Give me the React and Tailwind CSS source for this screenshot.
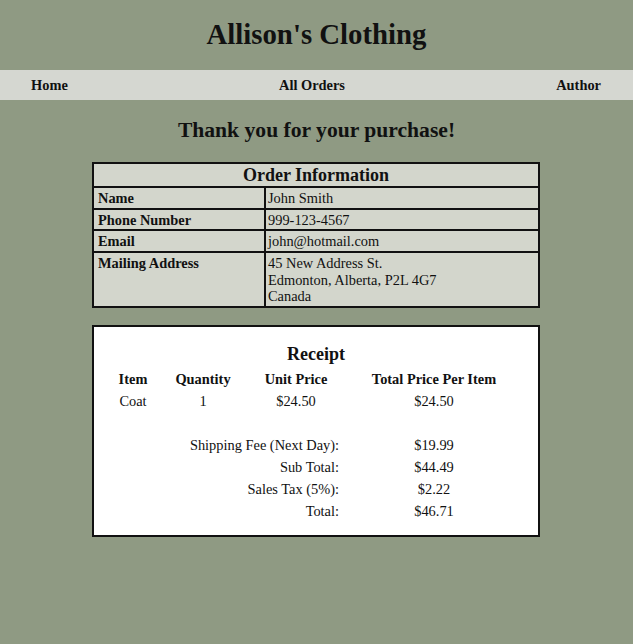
const order = [
  { label: 'Name', value: ['John Smith'], h: 'h-[22px]' },
  { label: 'Phone Number', value: ['999-123-4567'], h: 'h-[21px]' },
  { label: 'Email', value: ['john@hotmail.com'], h: 'h-[22px]' },
  { label: 'Mailing Address', value: ['45 New Address St.', 'Edmonton, Alberta, P2L 4G7', 'Canada'], h: 'h-[53px]' },
]

const totals = [
  ['Shipping Fee (Next Day):', '$19.99'],
  ['Sub Total:', '$44.49'],
  ['Sales Tax (5%):', '$2.22'],
  ['Total:', '$46.71'],
]

export default function App() {
  return (
    <div className="min-h-[644px] bg-[#8f9a83] text-[#111] font-['Liberation_Serif',serif] pb-10">
      <h1 className="pt-[18px] h-[70px] text-center text-[28.8px] font-bold leading-[33px]">Allison's Clothing</h1>

      <nav className="h-[30px] bg-[#d5d7d1] flex items-center justify-between px-[31px] pt-[1px] text-[14.4px] font-bold">
        <span>Home</span>
        <span>All Orders</span>
        <span className="mr-[1px]">Author</span>
      </nav>

      <h2 className="mt-[18px] text-center text-[21.6px] font-bold leading-[25px]">Thank you for your purchase!</h2>

      {/* order info */}
      <div className="mt-[19px] ml-[92px] w-[448px] border-2 border-[#111] bg-[#d3d6cc] text-[14.4px] leading-[16.5px]">
        <div className="h-[24px] border-b-2 border-[#111] flex items-center justify-center text-[18px] font-bold">
          Order Information
        </div>
        {order.map((row, i) => (
          <div key={row.label} className={`flex ${row.h} ${i < order.length - 1 ? 'border-b-2 border-[#111]' : ''}`}>
            <div className="w-[170px] pl-[4px] pt-[2px] font-bold">{row.label}</div>
            <div className="flex-1 border-l-2 border-[#111] pl-[2px] pt-[2px]">
              {row.value.map((v) => (
                <div key={v}>{v}</div>
              ))}
            </div>
          </div>
        ))}
      </div>

      {/* receipt */}
      <div className="mt-[17px] ml-[92px] w-[448px] border-2 border-[#111] bg-white pt-[16px] pb-[13px] text-[14.4px]">
        <h3 className="text-center text-[18px] font-bold leading-[22px] h-[25px]">Receipt</h3>
        <div className="ml-[13px] w-[416px] grid grid-cols-[52px_88px_98px_178px] text-center leading-[22px]">
          <div className="font-bold">Item</div>
          <div className="font-bold">Quantity</div>
          <div className="font-bold">Unit Price</div>
          <div className="font-bold">Total Price Per Item</div>

          <div>Coat</div>
          <div>1</div>
          <div>$24.50</div>
          <div>$24.50</div>

          <div className="col-span-4 h-[22px]" />

          {totals.map(([label, amount]) => (
            <div key={label} className="contents">
              <div className="col-span-3 text-right pr-[6px]">{label}</div>
              <div>{amount}</div>
            </div>
          ))}
        </div>
      </div>
    </div>
  )
}
